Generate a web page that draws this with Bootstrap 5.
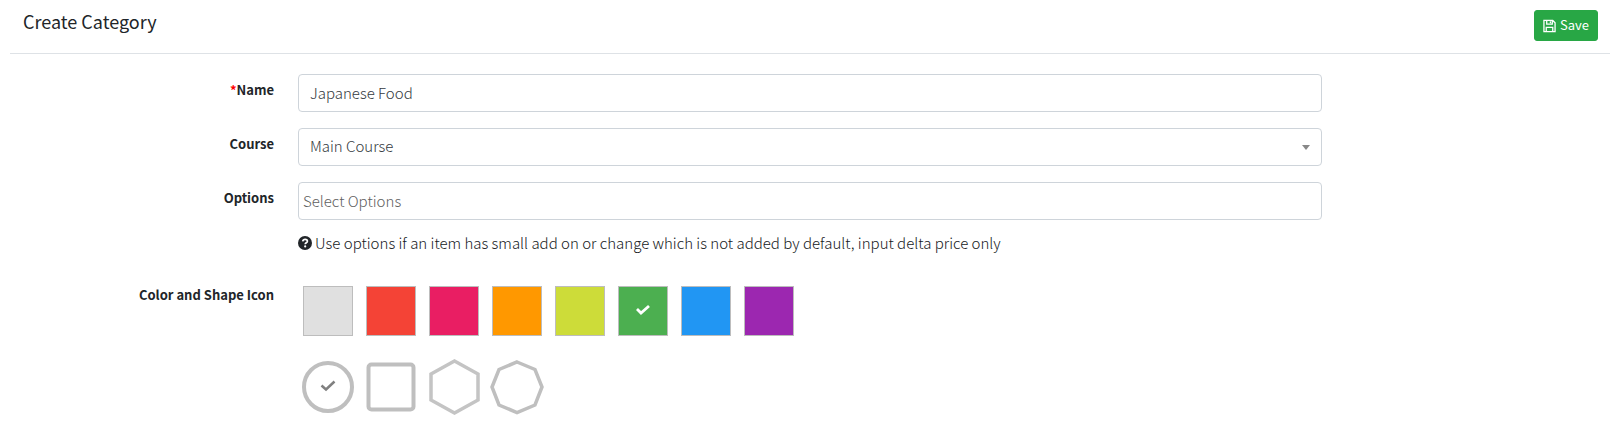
<!DOCTYPE html>
<html lang="en">
<head>
<meta charset="utf-8">
<meta name="viewport" content="width=device-width, initial-scale=1">
<title>Create Category</title>
<link href="https://cdn.jsdelivr.net/npm/bootstrap@5.3.0/dist/css/bootstrap.min.css" rel="stylesheet">
<style>
  body { font-family: "Noto Sans CJK JP", "Open Sans", sans-serif; font-size: 15px; line-height: 24px; font-weight: 300; color: #16191c; background: #fff; }
  .page-head { margin-left: 10px; padding: 10px 12px 12px 13px; border-bottom: 1px solid #dee2e6; }
  .page-title { font-size: 18px; line-height: 22px; font-weight: 400; color: #212529; }
  .btn-save { padding: 4px 8px; font-size: 13px; line-height: 21px; color: #fff; background: #28a745; border: 1px solid #28a745; border-radius: 3px; }
  .btn-save:hover { color: #fff; background: #218838; }
  .btn-save span { line-height: 19px; padding-bottom: 2px; }
  .form-body { padding: 20px 14px 16px 24px; }
  .field-name { font-size: 13px; line-height: 20px; font-weight: 700; padding-top: 6px; color: #212529; }
  .form-control, .form-select { height: 38px; font-size: 15px; line-height: 24px; font-weight: 300; color: #343a40; border-color: #ced4da; border-radius: 4px; padding: 5px 11px 7px; }
  .form-select { background-image: url("data:image/svg+xml,%3Csvg xmlns='http://www.w3.org/2000/svg' viewBox='0 0 8 5'%3E%3Cpath fill='%23888' d='M0 0h8L4 5z'/%3E%3C/svg%3E"); background-size: 8px 5px; background-position: right 11px center; }
  .tag-input { padding-left: 4px; }
  .tag-input::placeholder { color: #606060; }
  .help-line { margin-top: 11px; column-gap: 3px; }
  .swatch { width: 50px; height: 50px; border: 1px solid #bdbdbd; color: #fff; cursor: pointer; }
  .tick { display: none; }
  .btn-check:checked + label .tick { display: block; }
  .btn-check:focus-visible + label { outline: 2px solid #80bdff; }
  .choices { column-gap: 13px; padding-left: 5px; }
  .choices label { flex: none; }
  #colors { padding-top: 7px; }
  .shape { width: 50px; height: 56px; cursor: pointer; }
  .shape svg { overflow: visible; }
</style>
</head>
<body>
<header class="page-head d-flex justify-content-between align-items-start">
  <h1 class="page-title mb-0">Create Category</h1>
  <button type="submit" form="category" class="btn btn-save d-flex align-items-center gap-1">
    <svg width="13" height="14" viewBox="0 0 14 14" fill="none" stroke="currentColor" stroke-width="1.400" aria-hidden="true"><path d="M1 1h9.500L13 3.500V13H1zM4 1v4h6V1M3.500 13V8.500h7V13"/><path d="M7.300 2h1.400v2H7.300z" fill="currentColor" stroke="none"/></svg>
    <span>Save</span>
  </button>
</header>

<form id="category" class="form-body">
  <div class="row mx-0 mb-3">
    <label for="name" class="col-2 text-end field-name"><span style="color:red">*</span>Name</label>
    <div class="col-8"><input id="name" type="text" class="form-control" value="Japanese Food"></div>
  </div>
  <div class="row mx-0 mb-3">
    <label for="course" class="col-2 text-end field-name">Course</label>
    <div class="col-8"><select id="course" class="form-select"><option>Main Course</option></select></div>
  </div>
  <div class="row mx-0 mb-4">
    <label for="options" class="col-2 text-end field-name">Options</label>
    <div class="col-8">
      <input id="options" type="text" class="form-control tag-input" placeholder="Select Options" aria-describedby="options-help">
      <div id="options-help" class="help-line d-flex align-items-center">
        <svg class="flex-shrink-0" width="14" height="14" viewBox="0 0 14 14" aria-hidden="true"><circle cx="7" cy="7" r="7" fill="#212529"/><path d="M4.700 5.300C5 3.800 6 3.300 7.100 3.300c1.300 0 2.300.8 2.300 1.900 0 1.600-2.200 1.600-2.200 3.100" fill="none" stroke="#fff" stroke-width="1.700"/><circle cx="7.200" cy="10.400" r="1.100" fill="#fff"/></svg>
        <span>Use options if an item has small add on or change which is not added by default, input delta price only</span>
      </div>
    </div>
  </div>
  <div class="row mx-0">
    <div class="col-2 text-end field-name" id="icon-label">Color and Shape Icon</div>
    <div class="col-8">
      <div class="choices d-flex flex-wrap" role="radiogroup" aria-labelledby="icon-label" id="colors"></div>
      <div class="choices d-flex flex-wrap mt-4" role="radiogroup" aria-labelledby="icon-label">
        <input class="btn-check" type="radio" name="shape" id="circle" checked>
        <label class="shape" for="circle" aria-label="Circle"><svg width="50" height="56" viewBox="0 0 50 56" fill="none" stroke="#bfbfbf" stroke-width="4"><circle cx="25" cy="27" r="24"/><path class="tick" d="M18.500 25.500l4.500 4 8.500-8" stroke="#808080" stroke-width="2.500"/></svg></label>
        <input class="btn-check" type="radio" name="shape" id="square">
        <label class="shape" for="square" aria-label="Square"><svg width="50" height="56" viewBox="0 0 50 56" fill="none" stroke="#bfbfbf" stroke-width="4"><rect x="2.500" y="4.500" width="45" height="45" rx="3"/></svg></label>
        <input class="btn-check" type="radio" name="shape" id="hexagon">
        <label class="shape" for="hexagon" aria-label="Hexagon"><svg width="50" height="56" viewBox="0 0 50 56" fill="none" stroke="#c4c4c4" stroke-width="3.500"><path d="M25.500 1l23.500 13v26l-23.500 13L2 40v-26z"/></svg></label>
        <input class="btn-check" type="radio" name="shape" id="octagon">
        <label class="shape" for="octagon" aria-label="Octagon"><svg width="50" height="56" viewBox="0 0 50 56" fill="none" stroke="#bfbfbf" stroke-width="3.500"><path d="M25 2l18 7.500L50 27l-7 18-18 7.500L7 45 0 27 7 9.500z"/></svg></label>
      </div>
    </div>
  </div>
</form>
<script src="https://cdn.jsdelivr.net/npm/bootstrap@5.3.0/dist/js/bootstrap.bundle.min.js"></script>
<script>
  const colors = [["Grey", "#e0e0e0"], ["Red", "#f44336"], ["Pink", "#e91e63"], ["Orange", "#ff9800"], ["Lime", "#cddc39"], ["Green", "#4caf50"], ["Blue", "#2196f3"], ["Purple", "#9c27b0"]];
  document.getElementById("colors").innerHTML = colors.map(([name, hex]) => `
    <input class="btn-check" type="radio" name="color" id="${name}" ${name === "Green" ? "checked" : ""}>
    <label class="swatch d-flex align-items-center justify-content-center" for="${name}" aria-label="${name}" style="background:${hex}">
      <svg class="tick" width="16" height="14" viewBox="0 0 16 14" fill="none" stroke="currentColor" stroke-width="2.800"><path d="M2 5l4 4 8-7"/></svg>
    </label>`).join("");
</script>
</body>
</html>
